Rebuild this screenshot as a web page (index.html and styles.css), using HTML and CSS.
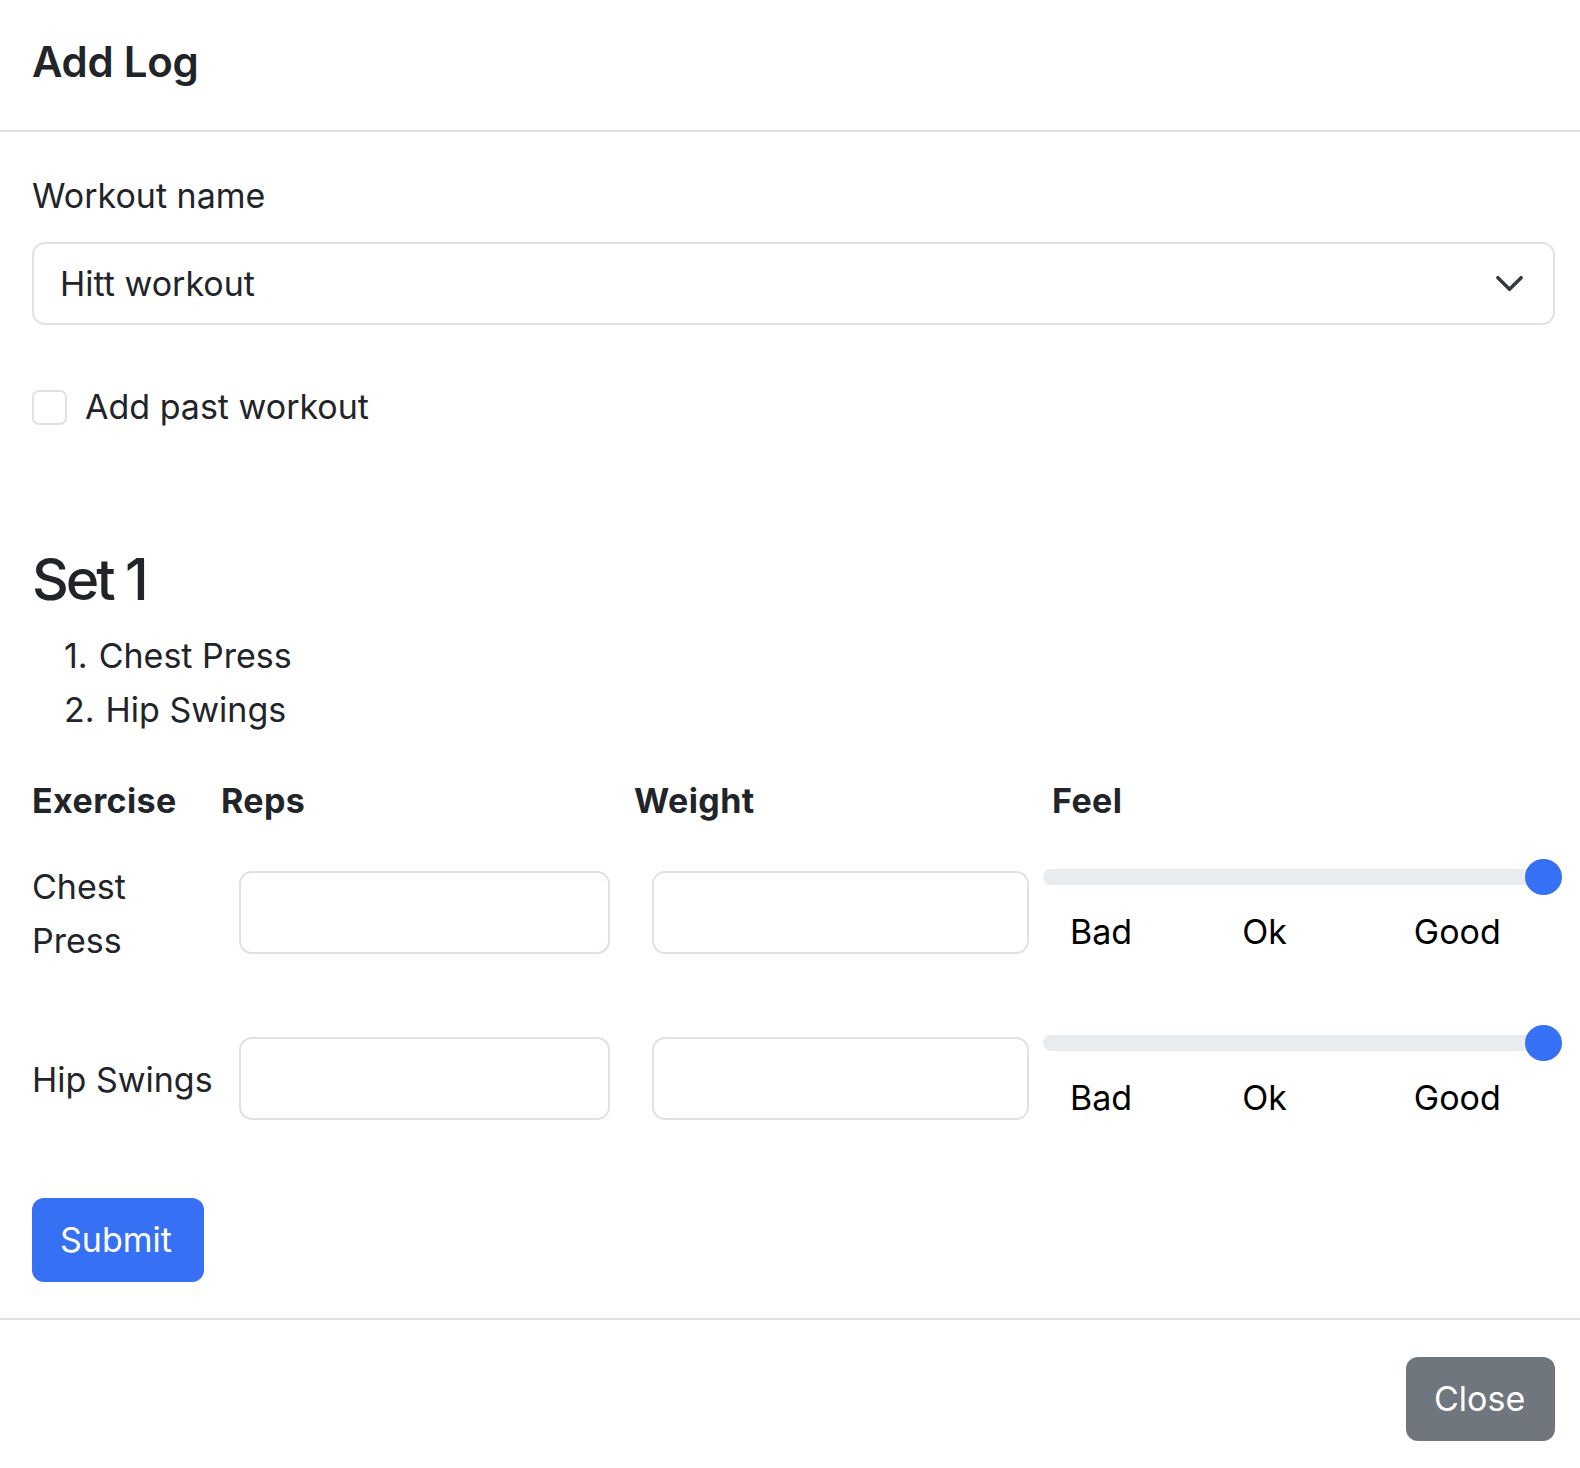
FILE: index.html
```html
<!DOCTYPE html>
<html lang="en">
<head>
<meta charset="utf-8">
<title>Add Log</title>
<link rel="stylesheet" href="styles.css">
</head>
<body>
<div class="modal">
  <header class="modal-header">
    <h5 class="modal-title">Add Log</h5>
  </header>
  <div class="modal-body">
    <label class="form-label">Workout name</label>
    <div class="form-select">
      <span>Hitt workout</span>
      <svg class="chevron" viewBox="0 0 16 16" width="31" height="31"><path d="M2 5l6 6 6-6" fill="none" stroke="#343a40" stroke-width="1.8" stroke-linecap="round" stroke-linejoin="round"/></svg>
    </div>
    <div class="form-check">
      <span class="check-box"></span>
      <span class="check-label">Add past workout</span>
    </div>
    <h3 class="set-title">Set 1</h3>
    <ol class="ex-list">
      <li><span class="num">1.</span>Chest Press</li>
      <li><span class="num">2.</span>Hip Swings</li>
    </ol>
    <div class="head-row">
      <span class="h-ex">Exercise</span>
      <span class="h-reps">Reps</span>
      <span class="h-weight">Weight</span>
      <span class="h-feel">Feel</span>
    </div>
    <div class="ex-row row-one">
      <div class="ex-name">Chest<br>Press</div>
      <div class="ex-input reps"></div>
      <div class="ex-input weight"></div>
      <div class="feel">
        <div class="slider"><div class="track"></div><div class="thumb"></div></div>
        <div class="feel-labels"><span class="bad">Bad</span><span class="ok">Ok</span><span class="good">Good</span></div>
      </div>
    </div>
    <div class="ex-row row-two">
      <div class="ex-name">Hip Swings</div>
      <div class="ex-input reps"></div>
      <div class="ex-input weight"></div>
      <div class="feel">
        <div class="slider"><div class="track"></div><div class="thumb"></div></div>
        <div class="feel-labels"><span class="bad">Bad</span><span class="ok">Ok</span><span class="good">Good</span></div>
      </div>
    </div>
    <button class="btn btn-primary">Submit</button>
  </div>
  <footer class="modal-footer">
    <button class="btn btn-secondary">Close</button>
  </footer>
</div>
</body>
</html>
```

FILE: styles.css
```css
* { box-sizing: border-box; }
html, body { margin: 0; padding: 0; background: #fff; }
body {
  font-family: Inter, "Noto Sans", "Liberation Sans", sans-serif;
  font-size: 34px;
  line-height: 50px;
  color: #212529;
  width: 1580px;
  height: 1468px;
  overflow: hidden;
}
.modal { width: 1580px; }
.modal-header {
  height: 132px;
  padding: 32px 32px 0;
  border-bottom: 2px solid #dee2e6;
}
.modal-title {
  margin: 0;
  font-size: 42px;
  line-height: 60px;
  font-weight: 600;
  letter-spacing: -0.3px;
}
.modal-body {
  padding: 39px 25px 36px 32px;
}
.form-label { display: block; }
.form-select {
  margin-top: 21px;
  height: 83px;
  border: 2px solid #dee2e6;
  border-radius: 13px;
  display: flex;
  align-items: center;
  justify-content: space-between;
  padding: 0 28px 0 26px;
}
.chevron { display: block; }
.form-check {
  margin-top: 57px;
  display: flex;
  align-items: center;
  gap: 18px;
}
.check-box {
  width: 35px;
  height: 35px;
  border: 2px solid #dee2e6;
  border-radius: 7px;
  flex: none;
}
.set-title {
  margin: 113px 0 0;
  font-size: 57px;
  line-height: 70px;
  font-weight: 500;
  letter-spacing: -3px;
}
.ex-list {
  list-style: none;
  margin: 14px 0 0;
  padding: 0 0 0 32px;
  line-height: 54px;
}
.ex-list .num { margin-right: 11px; }
.head-row {
  margin-top: 37px;
  display: grid;
  grid-template-columns: 189px 413px 418px 1fr;
  line-height: 54px;
  font-weight: 700;
  letter-spacing: 0.4px;
}
.ex-row {
  display: grid;
  grid-template-columns: 207px 371px 419px 533px;
  align-items: start;
  width: 1530px;
}
.ex-row .ex-input {
  height: 83px;
  border: 2px solid #dee2e6;
  border-radius: 13px;
  margin-top: 12px;
}
.ex-row .weight { width: 377px; margin-left: 42px; }
.ex-row .feel { margin-left: 14px; }
.row-one { margin-top: 31px; }
.row-one .ex-name { margin-top: 1px; line-height: 54px; }
.row-two { margin-top: 57px; }
.row-two .ex-name { margin-top: 28px; line-height: 54px; }
.slider {
  position: relative;
  height: 36px;
  display: flex;
  align-items: center;
}
.track {
  width: 100%;
  height: 16px;
  border-radius: 8px;
  background: #e9ecef;
}
.thumb {
  position: absolute;
  right: 0;
  top: 0;
  width: 37px;
  height: 36px;
  border-radius: 50%;
  background: #3670f4;
}
.feel-labels {
  margin-top: 12px;
  display: flex;
  color: #000;
}
.feel-labels .bad { margin-left: 27px; }
.feel-labels .ok { margin-left: 110px; }
.feel-labels .good { margin-left: 127px; }
.btn {
  font-family: inherit;
  font-size: 34px;
  line-height: 50px;
  height: 84px;
  border: none;
  border-radius: 12px;
  color: #fff;
  padding: 0 28px;
  display: flex;
  align-items: center;
}
.btn-primary {
  margin-top: 75px;
  background: #3670f4;
  width: 172px;
}
.btn-secondary {
  background: #6f767e;
  width: 149px;
  margin-left: auto;
  padding: 0 28px;
}
.modal-footer {
  border-top: 2px solid #dee2e6;
  padding: 37px 25px 0 32px;
  display: flex;
}
```
